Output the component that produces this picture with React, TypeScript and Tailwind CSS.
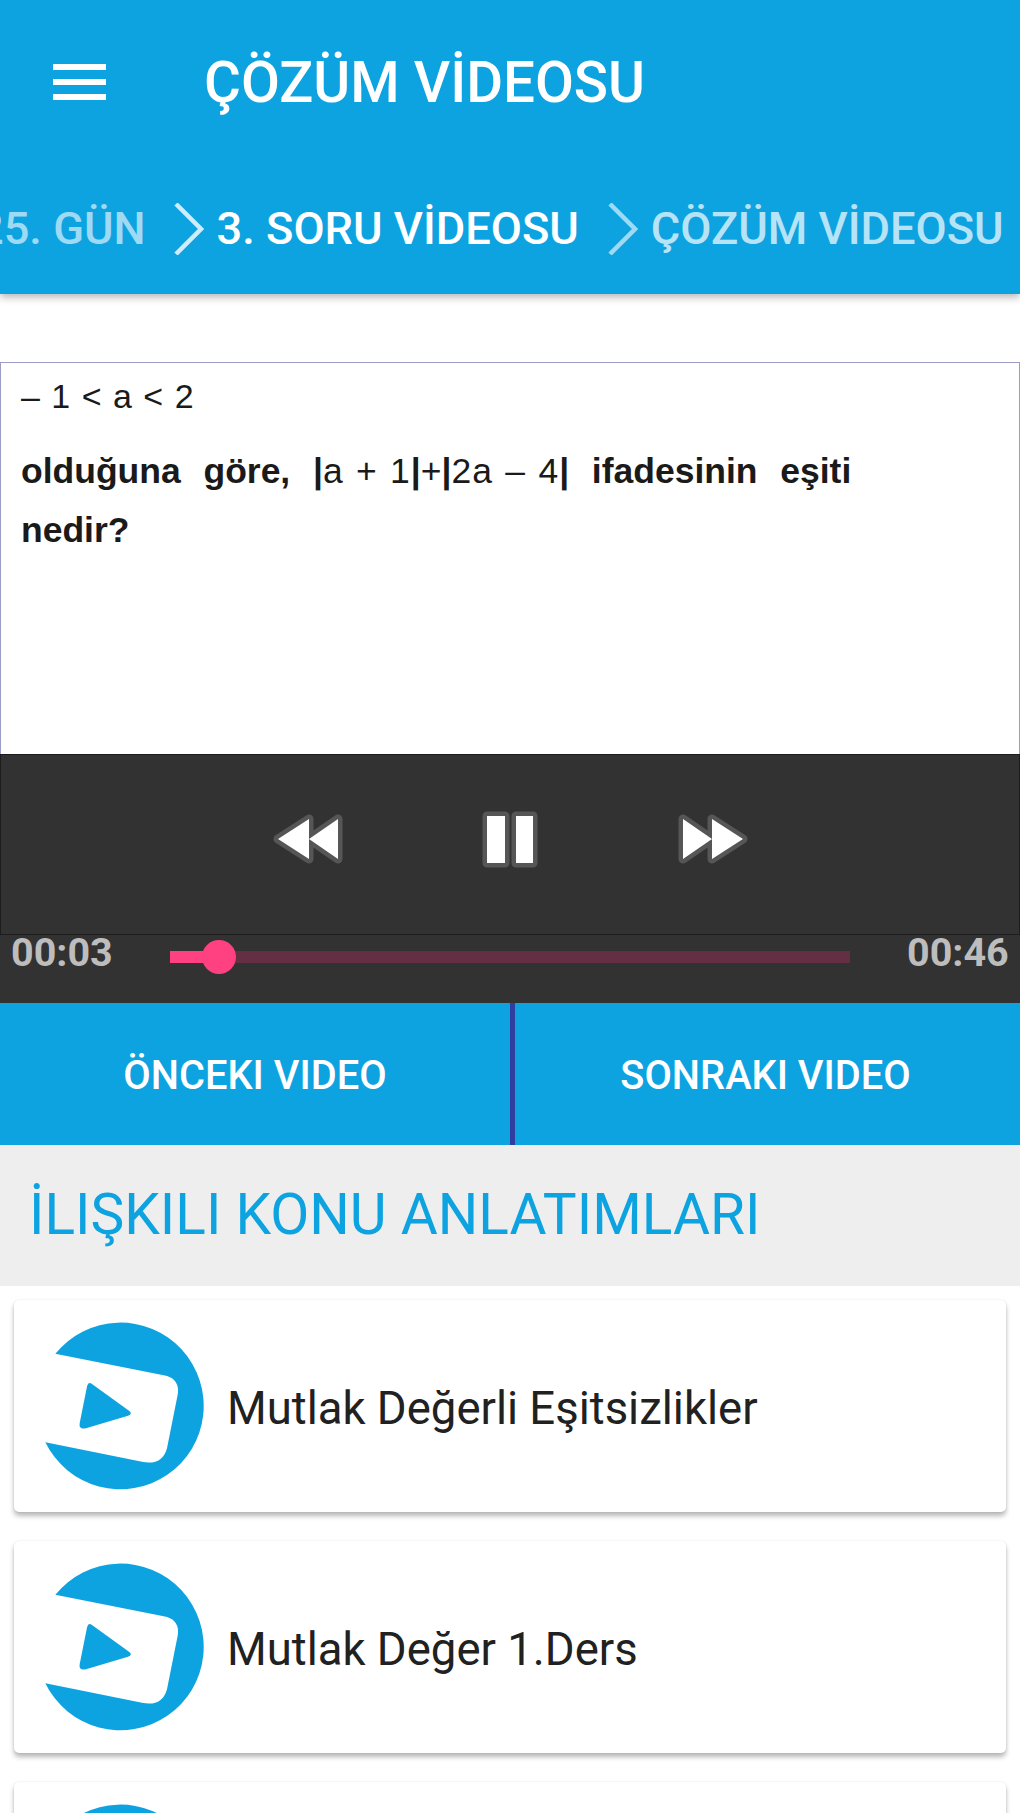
import React from 'react';

const roboto = "font-['Roboto',sans-serif]";

function Chevron({ faded }: { faded?: boolean }) {
  return (
    <svg width="30" height="52" viewBox="0 0 30 52" className={`shrink-0 ${faded ? 'opacity-60' : 'opacity-80'}`}>
      <path d="M2 1 L27 26 L2 51" fill="none" stroke="#ffffff" strokeWidth="4.5" />
    </svg>
  );
}

function MenuIcon() {
  return (
    <svg width="53" height="36" viewBox="0 0 53 36" className="ml-[53px] shrink-0">
      <path d="M0 0h53v6H0zM0 15h53v6H0zM0 30h53v6H0z" fill="#ffffff" />
    </svg>
  );
}

function Logo() {
  return (
    <svg width="180" height="187" viewBox="100 130 540 560" className="shrink-0">
      <path
        d="M170 252 A250 250 0 1 1 140 517 L430 576 Q490 588 505 535 L537 375 Q545 325 495 316 Z"
        fill="#0da3e1"
      />
      <path
        d="M283 345 L390 422 Q404 432 388 438 L262 475 Q240 480 243 460 L265 350 Q270 332 283 345 Z"
        fill="#0da3e1"
      />
    </svg>
  );
}

function Rewind({ flip }: { flip?: boolean }) {
  const shapes = 'M34 3 L34 43 L3 23 Z M63 3 L63 43 L34 23 Z';
  return (
    <svg width="67" height="47" viewBox="0 0 67 47" className={`overflow-visible ${flip ? 'scale-x-[-1]' : ''}`}>
      <path d={shapes} fill="#565656" stroke="#565656" strokeWidth="9" strokeLinejoin="round" />
      <path d={shapes} fill="#ffffff" />
    </svg>
  );
}

function Pause() {
  const shapes = 'M4 4h18v47H4z M33 4h17v47H33z';
  return (
    <svg width="54" height="55" viewBox="0 0 54 55" className="overflow-visible">
      <path d={shapes} fill="#565656" stroke="#565656" strokeWidth="9" strokeLinejoin="round" />
      <path d={shapes} fill="#ffffff" />
    </svg>
  );
}

function TopicCard({ title }: { title?: string }) {
  return (
    <div className="mx-[14px] h-[212px] shrink-0 rounded-[5px] bg-white flex items-center shadow-[0_4px_5px_rgba(0,0,0,0.28),0_0_2px_rgba(0,0,0,0.1)]">
      <div className="ml-[18px] mr-[15px] flex items-center">
        <Logo />
      </div>
      {title && <span className="pt-[6px] text-[45.5px] text-[#212121] leading-none whitespace-nowrap">{title}</span>}
    </div>
  );
}

export default function App() {
  return (
    <div className={`w-[1020px] h-[1813px] overflow-hidden bg-white flex flex-col ${roboto}`}>
      <header className="h-[294px] shrink-0 bg-[#0da3e1] text-white shadow-[0_3px_8px_rgba(0,0,0,0.3)] relative z-10 flex flex-col">
        <div className="h-[164px] flex items-center">
          <MenuIcon />
          <h1 className="ml-[98px] pt-[2px] text-[56.5px] font-medium leading-none whitespace-nowrap">ÇÖZÜM VİDEOSU</h1>
        </div>
        <div className="flex items-center mt-[39px] text-[45.2px] font-medium leading-none whitespace-nowrap overflow-hidden">
          <span className="ml-[-22px] opacity-60">25. GÜN</span>
          <span className="ml-[28px]"><Chevron /></span>
          <span className="ml-[13px]">3. SORU VİDEOSU</span>
          <span className="ml-[29px]"><Chevron faded /></span>
          <span className="ml-[13px] opacity-70">ÇÖZÜM VİDEOSU</span>
        </div>
      </header>

      <section className="mt-[68px] h-[392px] shrink-0 border border-b-0 border-[#9c9cc4] bg-white pl-[20px] pt-[15px] font-['Liberation_Sans',sans-serif] text-[#1a1a1a]">
        <p className="text-[34px] leading-[36px] [word-spacing:2px]">– 1 &lt; a &lt; 2</p>
        <p className="mt-[39px] text-[35.5px] leading-[36px] font-bold whitespace-nowrap [word-spacing:1.5px]">
          olduğuna&nbsp; göre,&nbsp;&nbsp;|<span className="font-normal tracking-[1px]">a + 1</span>|<span className="font-normal">+</span>|<span className="font-normal tracking-[1px]">2a – 4</span>|&nbsp;&nbsp;ifadesinin&nbsp; eşiti
        </p>
        <p className="mt-[23px] text-[35.5px] leading-[36px] font-bold">nedir?</p>
      </section>

      <section className="h-[249px] shrink-0 bg-[#323232] flex flex-col">
        <div className="h-[181px] pb-[10px] border border-[#1c1c1c] flex items-center justify-center">
          <div className="w-[202px] flex justify-center"><Rewind /></div>
          <div className="w-[202px] flex justify-center"><Pause /></div>
          <div className="w-[202px] flex justify-center"><Rewind flip /></div>
        </div>
        <div className="flex items-start">
          <span className="ml-[11px] w-[159px] text-[39.5px] leading-[36px] font-bold text-[#bdbdbd]">00:03</span>
          <div className="relative mt-[16px] h-[12px] w-[680px] bg-[#642f42]">
            <div className="h-full w-[49px] bg-[#ff4081]" />
            <div className="absolute left-[32px] top-[-11px] w-[34px] h-[34px] rounded-full bg-[#ff4081]" />
          </div>
          <span className="ml-[57px] text-[39.5px] leading-[36px] font-bold text-[#bdbdbd]">00:46</span>
        </div>
      </section>

      <div className="h-[142px] shrink-0 flex bg-[#0da3e1] text-white text-[39.8px] font-medium leading-none">
        <button className="w-[510px] pt-[3px] flex items-center justify-center">ÖNCEKI VIDEO</button>
        <div className="w-[5px] bg-[#303f9f]" />
        <button className="flex-1 pt-[3px] pr-[4px] flex items-center justify-center">SONRAKI VIDEO</button>
      </div>

      <div className="h-[141px] shrink-0 bg-[#eeeeee] flex items-center pl-[29px] text-[56.8px] text-[#0da3e1] leading-none whitespace-nowrap">
        İLIŞKILI KONU ANLATIMLARI
      </div>

      <div className="flex flex-col gap-[29px] pt-[14px]">
        <TopicCard title="Mutlak Değerli Eşitsizlikler" />
        <TopicCard title="Mutlak Değer 1.Ders" />
        <TopicCard />
      </div>
    </div>
  );
}
